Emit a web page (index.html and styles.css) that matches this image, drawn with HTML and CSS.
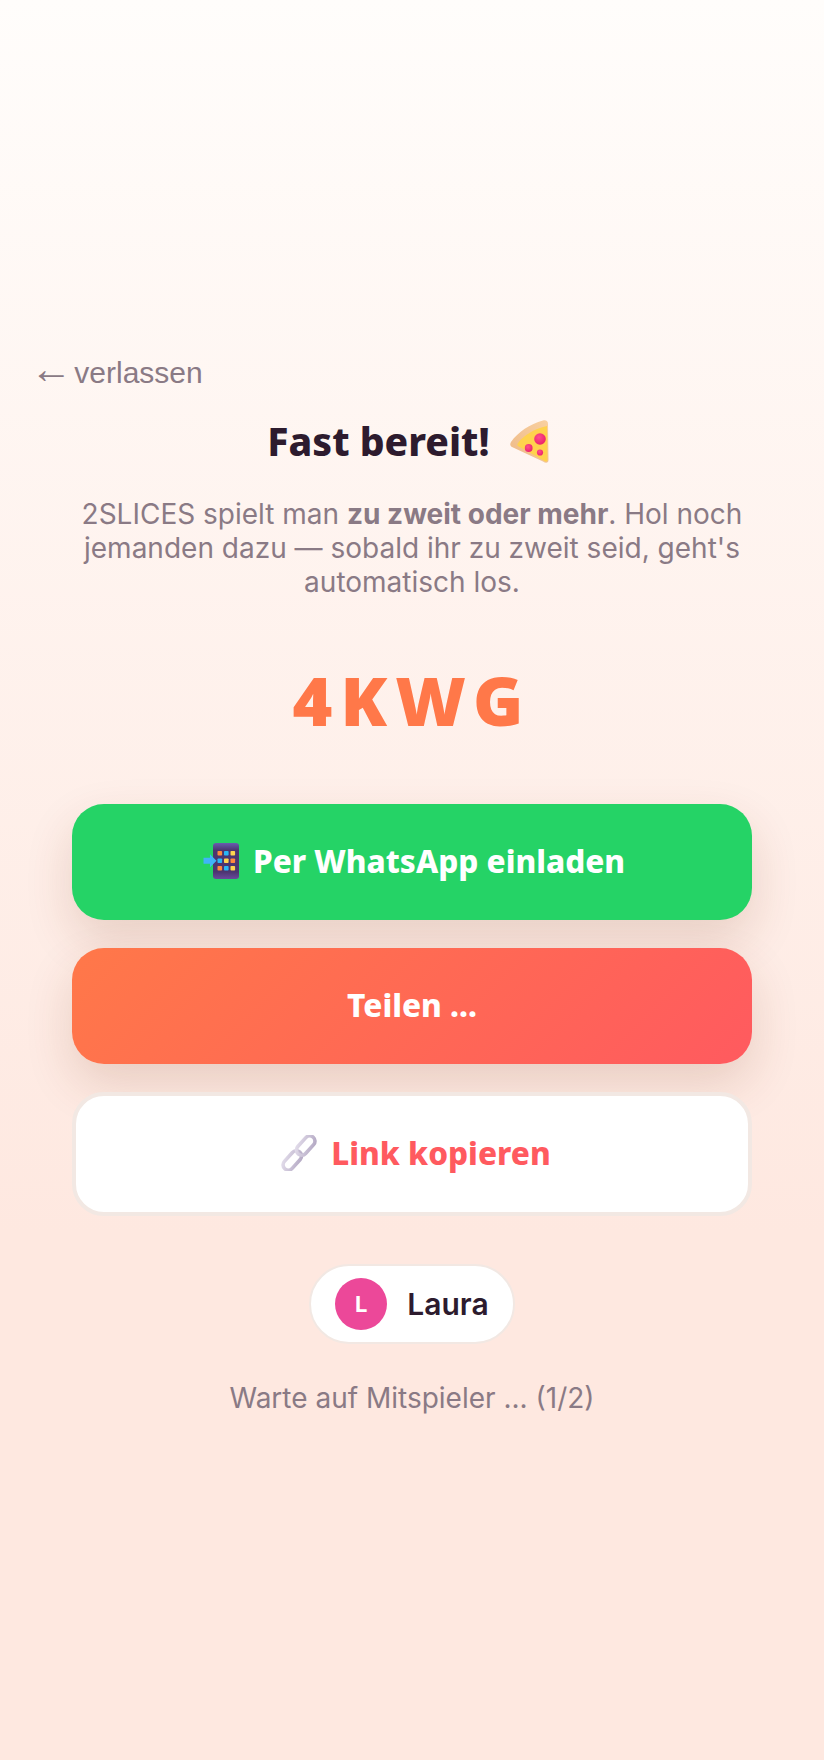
FILE: index.html
```html
<!DOCTYPE html>
<html lang="de">

<head>
  <meta charset="UTF-8">
  <meta name="viewport" content="width=device-width, initial-scale=1.0">
  <title>2SLICES</title>
  <link rel="stylesheet" href="styles.css">
</head>

<body>
  <main class="screen">
    <a class="back" href="#"><span class="back_arrow">←</span> verlassen</a>
    <div class="lobby">
      <h1 class="title">Fast bereit!
        <svg class="emoji pizza" viewBox="0 0 40 44">
          <defs>
            <linearGradient id="crust" x1="0" y1="1" x2="1" y2="0">
              <stop offset="0" stop-color="#eeb987" />
              <stop offset="1" stop-color="#f9d0a0" />
            </linearGradient>
            <radialGradient id="pep" cx="0.4" cy="0.35" r="0.7">
              <stop offset="0" stop-color="#ff4f8b" />
              <stop offset="1" stop-color="#ea1f6a" />
            </radialGradient>
          </defs>
          <path d="M2 23C9 13 21 5 34 1.500C37 .8 39 2 39 5L39.500 41C39.500 44 37 44.500 34 42.500L3 28C1 27 .8 25 2 23Z" fill="url(#crust)" />
          <path d="M9 24C15 16 25 10 38 7L38.500 41C38.500 42.500 37 43 35.500 42L9 27C8 26.500 8.300 25 9 24Z" fill="#ffd24d" />
          <circle cx="31" cy="20" r="5.800" fill="url(#pep)" />
          <circle cx="19.700" cy="29" r="3.900" fill="url(#pep)" />
          <circle cx="31" cy="33.500" r="3.100" fill="url(#pep)" />
        </svg>
      </h1>
      <p class="intro">2SLICES spielt man <strong>zu zweit oder mehr</strong>. Hol noch jemanden dazu — sobald ihr zu zweit seid, geht's automatisch los.</p>
      <div class="code">4KWG</div>

      <div class="actions">
        <button class="btn btn_whatsapp">
          <svg class="emoji phone" viewBox="0 0 36 36">
            <defs>
              <linearGradient id="case" x1="0" y1="0" x2="0" y2="1">
                <stop offset="0" stop-color="#6a5cb0" />
                <stop offset=".2" stop-color="#4c3570" />
                <stop offset=".8" stop-color="#4c3570" />
                <stop offset="1" stop-color="#6a4a9c" />
              </linearGradient>
            </defs>
            <rect x="10" y="0" width="26" height="36" rx="3" fill="url(#case)" />
            <rect x="14.500" y="8" width="4.600" height="4.600" rx=".8" fill="#ff8a3d" />
            <rect x="21" y="8" width="4.600" height="4.600" rx=".8" fill="#29b6f6" />
            <rect x="27.500" y="8" width="4.600" height="4.600" rx=".8" fill="#ffd54f" />
            <rect x="14.500" y="15.500" width="4.600" height="4.600" rx=".8" fill="#29b6f6" />
            <rect x="21" y="15.500" width="4.600" height="4.600" rx=".8" fill="#ffd54f" />
            <rect x="27.500" y="15.500" width="4.600" height="4.600" rx=".8" fill="#ff8a3d" />
            <rect x="14.500" y="23" width="4.600" height="4.600" rx=".8" fill="#ff8a3d" />
            <rect x="21" y="23" width="4.600" height="4.600" rx=".8" fill="#29b6f6" />
            <rect x="27.500" y="23" width="4.600" height="4.600" rx=".8" fill="#ffd54f" />
            <path d="M.5 14.700h6.500v-3.500l6.500 6.500-6.500 6.500v-3.500H.5Z" fill="#3fb4f8" />
          </svg>
          Per WhatsApp einladen
        </button>
        <button class="btn btn_share">Teilen ...</button>
        <button class="btn btn_copy">
          <svg class="emoji chain" viewBox="0 0 36 36">
            <defs>
              <linearGradient id="steel" x1="0" y1="0" x2="1" y2="1">
                <stop offset="0" stop-color="#e2dcea" />
                <stop offset="1" stop-color="#b4a9c4" />
              </linearGradient>
            </defs>
            <g fill="none" stroke="url(#steel)" stroke-width="3.600">
              <rect x="-11.250" y="-5.250" width="22.500" height="10.500" rx="5.250" transform="translate(11.300 25.400) rotate(-48)" />
              <rect x="-11.250" y="-5.250" width="22.500" height="10.500" rx="5.250" transform="translate(24.700 10.600) rotate(-48)" />
            </g>
          </svg>
          Link kopieren
        </button>
      </div>

      <div class="player">
        <span class="avatar">L</span>
        <span class="player_name">Laura</span>
      </div>
      <p class="waiting">Warte auf Mitspieler ... (1/2)</p>
    </div>
  </main>
</body>

</html>
```

FILE: styles.css
```css
* {
  box-sizing: border-box;
}

body {
  margin: 0;
  min-height: 100vh;
  font-family: Inter, 'Liberation Sans', sans-serif;
  color: #2d1b2e;
  background: linear-gradient(180deg, #fffdfb 0%, #fee8e0 70%);
}

.screen {
  min-height: 100vh;
  display: flex;
  flex-direction: column;
  justify-content: center;
  padding: 46px 36px 36px;
}

.back {
  align-self: flex-start;
  font-family: 'Liberation Sans', sans-serif;
  font-size: 30px;
  line-height: 34px;
  word-spacing: -6px;
  color: #8a7a85;
  text-decoration: none;
}

/* the arrow is drawn longer than the text size would give */
.back_arrow {
  font-size: 42px;
  line-height: 0;
  margin-left: -6px;
}

.lobby {
  display: flex;
  flex-direction: column;
  align-items: center;
  padding: 0 36px;
  margin-top: 24px;
}

.title {
  display: flex;
  align-items: center;
  gap: 19px;
  margin: 0;
  font-family: 'Noto Sans', sans-serif;
  font-size: 39px;
  font-weight: 800;
  line-height: 54px;
}

.emoji {
  flex: none;
  display: block;
}

.pizza {
  width: 40px;
  height: 44px;
  margin-right: 8px;
}

.intro {
  margin: 29px 0 0;
  font-size: 28px;
  line-height: 34px;
  text-align: center;
  color: #8a7a85;
}

.intro strong {
  font-weight: 700;
}

.code {
  margin-top: 57px;
  font-family: 'Noto Sans', sans-serif;
  font-size: 68px;
  font-weight: 900;
  line-height: 88px;
  letter-spacing: 8px;
  color: #ff7849;
}

.actions {
  width: 100%;
  display: flex;
  flex-direction: column;
  gap: 28px;
  margin-top: 60px;
}

.btn {
  display: flex;
  align-items: center;
  justify-content: center;
  gap: 14px;
  width: 100%;
  height: 116px;
  padding: 0 0 2px;
  border: 0;
  border-radius: 32px;
  font-family: 'Noto Sans', sans-serif;
  font-size: 31.500px;
  font-weight: 800;
  color: white;
}

.btn_whatsapp {
  background: #25d366;
  box-shadow: 0 20px 48px rgba(120, 50, 20, .16);
}

.btn_share {
  background: linear-gradient(135deg, #ff7849, #ff5a5f);
  box-shadow: 0 20px 48px rgba(120, 50, 20, .16);
}

.btn_copy {
  height: 124px;
  background: white;
  border: 4px solid #f2e8e3;
  color: #ff5a5f;
}

.phone {
  width: 36px;
  height: 36px;
  margin-left: 4px;
}

.chain {
  width: 36px;
  height: 36px;
  margin-left: 8px;
}

.player {
  display: flex;
  align-items: center;
  gap: 20px;
  margin-top: 48px;
  padding: 12px 24px;
  background: white;
  border: 2px solid #f2e8e3;
  border-radius: 40px;
}

.avatar {
  display: flex;
  align-items: center;
  justify-content: center;
  width: 52px;
  height: 52px;
  border-radius: 50%;
  background: #ec4899;
  color: white;
  font-size: 22px;
  font-weight: 700;
}

.player_name {
  font-size: 30px;
  font-weight: 600;
}

.waiting {
  margin: 37px 0 0;
  font-size: 28px;
  line-height: 34px;
  color: #8a7a85;
}
```
